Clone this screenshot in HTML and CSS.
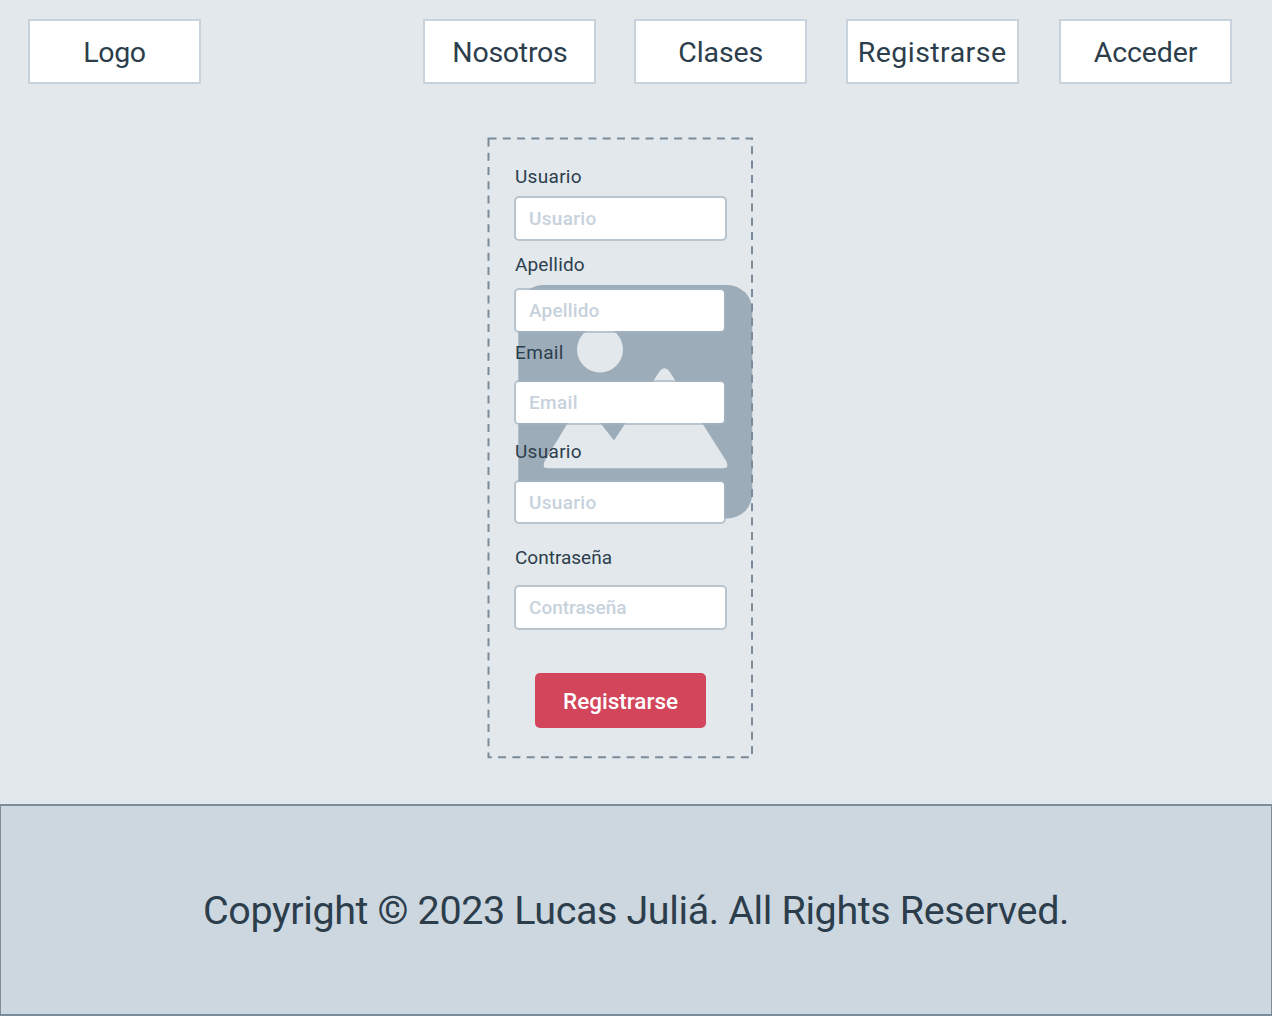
FILE: index.html
```html
<!DOCTYPE html>
<html lang="es">
<head>
<meta charset="utf-8">
<title>Registrarse</title>
<link rel="stylesheet" href="styles.css">
</head>
<body>
<header class="topbar">
  <a class="box logo">Logo</a>
  <nav class="menu">
    <a class="box nosotros">Nosotros</a>
    <a class="box clases">Clases</a>
    <a class="box registro">Registrarse</a>
    <a class="box acceder">Acceder</a>
  </nav>
</header>
<main class="content">
  <form class="panel">
    <svg class="backdrop" viewBox="487 137 267 622" aria-hidden="true">
      <rect x="518.3" y="285" width="234" height="233.5" rx="25" fill="#9dacb9"/>
      <circle cx="600" cy="349.5" r="23" fill="#e2e8ec"/>
      <path d="M548 468.3Q541.5 468.3 544.5 461.5L578 406Q582 400 587 406L614 440.5L659.5 371.5Q664.5 365 669.5 371.5L726.5 461.5Q729.5 468.3 723 468.3Z" fill="#e2e8ec"/>
      <path d="M488.5 138.5H752V757.2H488.5Z" fill="none" stroke="#7b8b99" stroke-width="2" stroke-dasharray="8 6.28"/>
    </svg>
    <div class="field first">
      <label class="label usuario" for="nombre">Usuario</label>
      <input class="input usuario" id="nombre" placeholder="Usuario">
    </div>
    <div class="field second">
      <label class="label apellido" for="apellido">Apellido</label>
      <input class="input narrow apellido" id="apellido" placeholder="Apellido">
    </div>
    <div class="field third">
      <label class="label email" for="email">Email</label>
      <input class="input narrow email" id="email" placeholder="Email">
    </div>
    <div class="field fourth">
      <label class="label usuario" for="usuario">Usuario</label>
      <input class="input narrow short usuario" id="usuario" placeholder="Usuario">
    </div>
    <div class="field fifth">
      <label class="label contrasena" for="contrasena">Contraseña</label>
      <input class="input contrasena" id="contrasena" placeholder="Contraseña">
    </div>
    <button class="submit" type="button">Registrarse</button>
  </form>
</main>
<footer class="footer">Copyright © 2023 Lucas Juliá. All Rights Reserved.</footer>
</body>
</html>
```
FILE: styles.css
```css
* { box-sizing: border-box; }
body {
  margin: 0;
  height: 1016px;
  display: flex;
  flex-direction: column;
  background: #e2e8ec;
  color: #2c3e4c;
  font-family: Roboto, "Liberation Sans", sans-serif;
}
.topbar {
  display: flex;
  justify-content: space-between;
  padding: 19px 40px 0 28px;
}
.menu { display: flex; gap: 38.4px; }
.box {
  width: 173px;
  height: 65px;
  border: 2px solid #c7d2dc;
  background: #fff;
  font-size: 28.5px;
  line-height: 64px;
  text-align: center;
  white-space: nowrap;
}
.logo { letter-spacing: -0.4px; }
.nosotros { letter-spacing: -0.25px; }
.clases { margin-left: -0.6px; letter-spacing: -0.1px; }
.registro { letter-spacing: 0.45px; }
.acceder { margin-left: 2px; letter-spacing: -0.1px; }
.content { flex: 1; padding: 53px 0 0 487px; }
.panel {
  position: relative;
  display: flex;
  flex-direction: column;
  width: 267px;
  height: 622px;
  padding: 29px 27px 0;
}
.backdrop { position: absolute; left: 0; top: 0; width: 267px; height: 622px; }
.field { position: relative; display: flex; flex-direction: column; gap: 8px; }
.second { margin-top: 13px; gap: 12px; }
.third { margin-top: 9px; gap: 16px; }
.fourth { margin-top: 16px; gap: 17px; }
.fifth { margin-top: 23px; gap: 16px; }
.label { font-size: 19px; line-height: 22px; padding-left: 1px; }
.input {
  width: 212.5px;
  height: 45px;
  padding: 0 13px;
  border: 2px solid rgba(161, 178, 192, 0.65);
  border-radius: 5px;
  background: #fff;
  background-clip: padding-box;
  font: 500 19px Roboto, "Liberation Sans", sans-serif;
}
.input.narrow { width: 212px; }
.input.short { height: 44px; }
.input::placeholder { color: #c7d2dc; opacity: 1; }
.usuario { letter-spacing: 0.3px; }
.apellido { letter-spacing: 0.15px; }
.email { letter-spacing: 0.35px; }
.submit {
  position: relative;
  align-self: center;
  width: 171.5px;
  height: 55px;
  margin-top: 43px;
  padding: 0;
  border: 0;
  border-radius: 5px;
  background: #d2455b;
  color: #fff;
  font: 500 22.5px Roboto, "Liberation Sans", sans-serif;
}
.footer {
  height: 212px;
  border: solid #7b8b99;
  border-width: 2px 1px;
  background: #cdd7e0;
  font-size: 39.5px;
  line-height: 209px;
  letter-spacing: -0.39px;
  text-align: center;
  white-space: nowrap;
}
```
